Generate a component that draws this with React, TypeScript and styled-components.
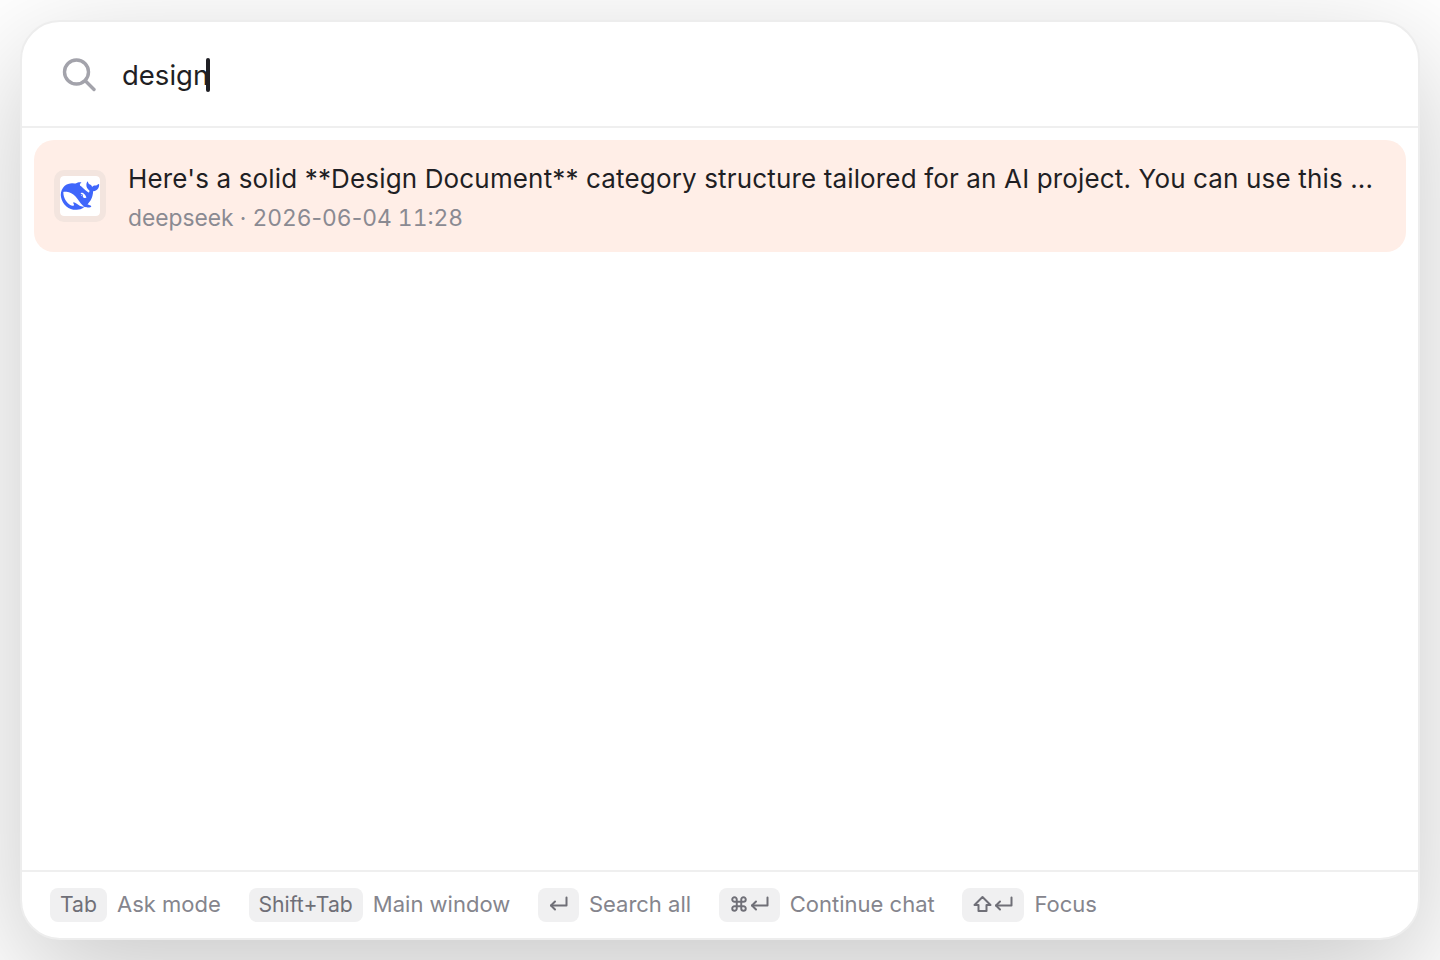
import styled, { createGlobalStyle } from 'styled-components';

const GlobalStyle = createGlobalStyle`
  html, body {
    margin: 0;
    padding: 0;
    background: #ffffff;
  }
  * {
    box-sizing: border-box;
  }
`;

const Page = styled.div`
  width: 1440px;
  height: 960px;
  padding: 20px;
  overflow: hidden;
  font-family: Inter, "Noto Sans", sans-serif;
`;

const Panel = styled.div`
  height: 920px;
  display: flex;
  flex-direction: column;
  background: #ffffff;
  border: 2px solid #ededed;
  border-radius: 40px;
  box-shadow: 0 36px 120px rgba(0, 0, 0, 0.22);
  overflow: hidden;
`;

const SearchBar = styled.div`
  height: 106px;
  flex: none;
  display: flex;
  align-items: center;
  gap: 26px;
  padding: 2px 0 0 40px;
  border-bottom: 2px solid #efefef;
`;

const SearchText = styled.div`
  display: flex;
  align-items: center;
  font-size: 27.5px;
  line-height: 34px;
  color: #1f1f24;
`;

const Caret = styled.span`
  width: 4px;
  height: 34px;
  margin-left: -3px;
  border-radius: 2px;
  background: #1f1f24;
`;

const Results = styled.div`
  flex: 1;
  padding: 12px;
`;

const ResultRow = styled.div`
  height: 112px;
  display: flex;
  align-items: center;
  gap: 22px;
  padding: 0 32px 0 20px;
  background: #ffeee7;
  border-radius: 20px;
`;

const AppTile = styled.div`
  width: 52px;
  height: 52px;
  flex: none;
  display: flex;
  align-items: center;
  justify-content: center;
  background: #ffffff;
  border: 6px solid #f3e5df;
  border-radius: 10px;
  background-clip: padding-box;
`;

const ResultBody = styled.div`
  min-width: 0;
  flex: 1;
  display: flex;
  flex-direction: column;
  gap: 7px;
  padding-top: 3px;
`;

const ResultTitle = styled.div`
  font-size: 26px;
  line-height: 34px;
  letter-spacing: 0.15px;
  color: #1f1f24;
  white-space: nowrap;
`;

const ResultMeta = styled.div`
  font-size: 22.8px;
  line-height: 30px;
  font-variant-numeric: tabular-nums;
  color: #8a8a92;
  white-space: nowrap;
`;

const DateDash = styled.span`
  font-variant-numeric: normal;
`;

const Footer = styled.div`
  height: 68px;
  flex: none;
  display: flex;
  align-items: center;
  gap: 27.7px;
  padding: 0 0 2px 28px;
  border-top: 2px solid #efefef;
`;

const Hint = styled.div`
  display: flex;
  align-items: center;
  gap: 10px;
  font-size: 22px;
  color: #85858d;
  white-space: nowrap;
`;

const Key = styled.span`
  height: 34px;
  margin-top: 2px;
  display: inline-flex;
  align-items: center;
  justify-content: center;
  gap: 2px;
  padding: 0 10px 2px;
  background: #f0f0f1;
  border-radius: 8px;
  font-size: 21.2px;
  color: #6f6f77;
`;

const SymbolKey = styled(Key)`
  padding: 0 11px 2px;
`;

const SearchIcon = () => (
  <svg width="34" height="34" viewBox="0 0 34 34" fill="none" stroke="#a3a3ab" strokeWidth="3.4" strokeLinecap="round">
    <circle cx="14.5" cy="14" r="12" />
    <path d="M23.5 23 L32 31.5" />
  </svg>
);

const ReturnIcon = () => (
  <svg width="19" height="16" viewBox="0 0 19 16" fill="none" stroke="#6f6f77" strokeWidth="2" strokeLinecap="round" strokeLinejoin="round">
    <path d="M17.5 1.5 V9.5 H2" />
    <path d="M6 5.5 L2 9.5 L6 13.5" />
  </svg>
);

const CommandIcon = () => (
  <svg width="18" height="18" viewBox="0 0 24 24" fill="none" stroke="#6f6f77" strokeWidth="2.6" strokeLinecap="round" strokeLinejoin="round">
    <path d="M15 6v12a3 3 0 1 0 3-3H6a3 3 0 1 0 3 3V6a3 3 0 1 0-3 3h12a3 3 0 1 0-3-3" />
  </svg>
);

const ShiftIcon = () => (
  <svg width="19" height="18" viewBox="0 0 19 18" fill="none" stroke="#6f6f77" strokeWidth="2" strokeLinejoin="round">
    <path d="M9.5 2 L17.5 10 H13.5 V16 H5.5 V10 H1.5 Z" />
  </svg>
);

const WhaleLogo = () => (
  <svg width="40" height="40" viewBox="-0.5 -0.5 25 25">
    <path
      fill="#3f66fb"
      d="M23.748 4.482c-.254-.124-.364.113-.512.234-.051.039-.094.09-.137.136-.372.397-.806.657-1.373.626-.829-.046-1.537.214-2.163.848-.133-.782-.575-1.248-1.247-1.548-.352-.156-.708-.311-.955-.65-.172-.241-.219-.51-.305-.774-.055-.16-.11-.323-.293-.35-.2-.031-.278.136-.356.276-.313.572-.434 1.202-.422 1.84.027 1.436.633 2.58 1.838 3.393.137.093.172.187.129.323-.082.28-.18.552-.266.833-.055.179-.137.217-.329.14a5.526 5.526 0 01-1.736-1.18c-.857-.828-1.631-1.742-2.597-2.458a11.365 11.365 0 00-.689-.471c-.985-.957.13-1.743.388-1.836.27-.098.093-.432-.779-.428-.872.004-1.67.295-2.687.684a3.055 3.055 0 01-.465.137 9.597 9.597 0 00-2.883-.102c-1.885.21-3.39 1.102-4.497 2.623C.082 8.606-.231 10.684.152 12.85c.403 2.284 1.569 4.175 3.36 5.653 1.858 1.533 3.997 2.284 6.438 2.14 1.482-.085 3.133-.284 4.994-1.86.47.234.962.327 1.78.397.63.059 1.236-.03 1.705-.128.735-.156.684-.837.419-.961-2.155-1.004-1.682-.595-2.113-.926 1.096-1.296 2.746-2.642 3.392-7.003.05-.347.007-.565 0-.845-.004-.17.035-.237.23-.256a4.173 4.173 0 001.545-.475c1.396-.763 1.96-2.015 2.093-3.517.02-.23-.004-.467-.247-.588zM11.581 18c-2.089-1.642-3.102-2.183-3.52-2.16-.392.024-.321.471-.235.763.09.288.207.486.371.739.114.167.192.416-.113.603-.673.416-1.842-.14-1.897-.167-1.361-.802-2.5-1.86-3.301-3.307-.774-1.393-1.224-2.887-1.298-4.482-.02-.386.093-.522.477-.592a4.696 4.696 0 011.529-.039c2.132.312 3.946 1.265 5.468 2.774.868.86 1.525 1.887 2.202 2.891.72 1.066 1.494 2.082 2.48 2.914.348.292.625.514.891.677-.802.09-2.14.11-3.054-.614zm1-6.44a.306.306 0 01.415-.287.302.302 0 01.2.288.306.306 0 01-.31.307.303.303 0 01-.304-.308zm3.11 1.596c-.2.081-.399.151-.59.16a1.245 1.245 0 01-.798-.254c-.274-.23-.47-.358-.552-.758a1.73 1.73 0 01.016-.588c.07-.327-.008-.537-.239-.727-.187-.156-.426-.199-.688-.199a.559.559 0 01-.254-.078c-.11-.054-.2-.19-.114-.358.028-.054.16-.186.192-.21.356-.202.767-.136 1.146.016.352.144.618.408 1.001.782.391.451.462.576.685.914.176.265.336.537.445.848.067.195-.019.354-.25.452z"
    />
  </svg>
);

export default function App() {
  return (
    <>
      <GlobalStyle />
      <Page>
        <Panel>
          <SearchBar>
            <SearchIcon />
            <SearchText>
              design
              <Caret />
            </SearchText>
          </SearchBar>
          <Results>
            <ResultRow>
              <AppTile>
                <WhaleLogo />
              </AppTile>
              <ResultBody>
                <ResultTitle>Here's a solid **Design Document** category structure tailored for an AI project. You can use this ...</ResultTitle>
                <ResultMeta>
                  deepseek · 2026<DateDash>-</DateDash>06<DateDash>-</DateDash>04 11:28
                </ResultMeta>
              </ResultBody>
            </ResultRow>
          </Results>
          <Footer>
            <Hint>
              <Key>Tab</Key>
              Ask mode
            </Hint>
            <Hint>
              <Key>Shift+Tab</Key>
              Main window
            </Hint>
            <Hint>
              <SymbolKey>
                <ReturnIcon />
              </SymbolKey>
              Search all
            </Hint>
            <Hint>
              <SymbolKey>
                <CommandIcon />
                <ReturnIcon />
              </SymbolKey>
              Continue chat
            </Hint>
            <Hint>
              <SymbolKey>
                <ShiftIcon />
                <ReturnIcon />
              </SymbolKey>
              Focus
            </Hint>
          </Footer>
        </Panel>
      </Page>
    </>
  );
}
